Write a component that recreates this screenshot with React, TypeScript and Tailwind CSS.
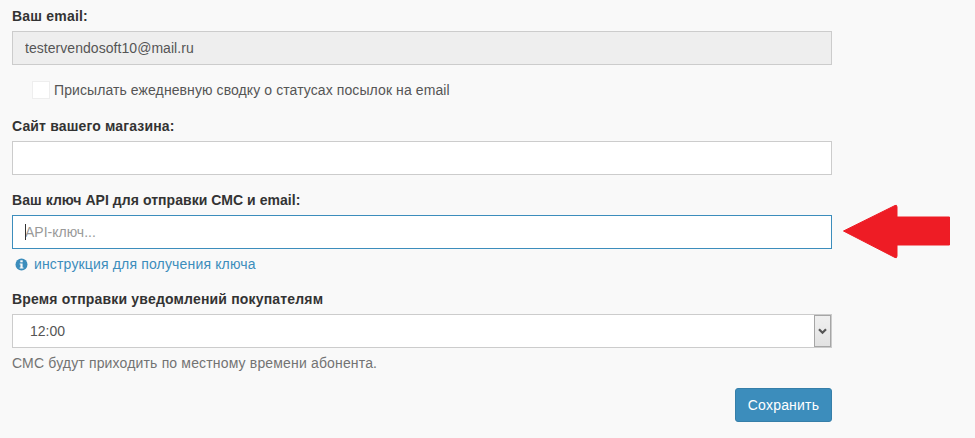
const labelClass = 'block h-5 mb-[5px] text-sm leading-5 font-bold text-[#333333]';
const inputClass =
  'block w-full h-[34px] px-3 border bg-white text-sm text-[#555555] outline-none placeholder:text-[#999999]';

export default function App() {
  return (
    <div className="w-[975px] h-[438px] overflow-hidden relative bg-[#f9f9f9] font-['Liberation_Sans',Arial,sans-serif] text-sm leading-5 text-[#333333]">
      <form className="w-[820px] ml-3 pt-1.5">
        <label className={`${labelClass} tracking-[0.2px]`}>Ваш email:</label>
        <input
          readOnly
          value="testervendosoft10@mail.ru"
          className="block w-full h-[34px] px-3 border border-[#cccccc] bg-[#eeeeee] text-sm text-[#555555] outline-none tracking-[0.05px]"
        />

        <div className="flex items-center h-5 mt-[15px] ml-5">
          <span className="w-[18px] h-[18px] border border-[#eeeeee] bg-white" />
          <span className="ml-1 text-[#555555] tracking-[0.09px]">Присылать ежедневную сводку о статусах посылок на email</span>
        </div>

        <label className={`${labelClass} mt-4 tracking-[0.15px]`}>Сайт вашего магазина:</label>
        <input className={`${inputClass} border-[#cccccc]`} />

        <label className={`${labelClass} mt-[15px] tracking-[0.05px]`}>Ваш ключ API для отправки СМС и email:</label>
        <div className="relative">
          <input placeholder="API-ключ..." className={`${inputClass} border-[#3c8dbc]`} />
          <span className="absolute left-[13px] top-[9px] w-px h-4 bg-[#333333]" />
        </div>

        <a className="flex items-center h-5 mt-[5px] ml-[3px] text-[#3c8dbc]">
          <svg width="13" height="13" viewBox="0 0 13 13">
            <circle cx="6.5" cy="6.5" r="6" fill="#3c8dbc" />
            <rect x="5.3" y="2.3" width="2.4" height="2" fill="#f9f9f9" />
            <path d="M4.6 5.4H7.6V9.4H8.5V10.6H4.6V9.4H5.4V6.6H4.6Z" fill="#f9f9f9" />
          </svg>
          <span className="ml-1.5 tracking-[0.16px]">инструкция для получения ключа</span>
        </a>

        <label className={`${labelClass} mt-[15px] tracking-[0.18px]`}>Время отправки уведомлений покупателям</label>
        <div className="flex h-[34px] border border-[#cccccc] bg-white text-[#555555]">
          <span className="flex-1 pl-[17px] leading-8">12:00</span>
          <span className="flex items-center justify-center w-[17px] h-full border border-[#a6a6a6] bg-gradient-to-b from-[#f0f0f0] to-[#e2e2e2]">
            <svg width="9" height="7" viewBox="0 0 9 7">
              <path d="M1 1.2l3.5 3.5 3.5-3.5" fill="none" stroke="#555555" strokeWidth="2.2" />
            </svg>
          </span>
        </div>
        <p className="mt-[5px] h-5 text-[#737373] tracking-[0.16px]">СМС будут приходить по местному времени абонента.</p>

        <div className="flex justify-end mt-[15px]">
          <button type="button" className="h-[34px] w-[97px] rounded-[3px] border border-[#367fa9] bg-[#3c8dbc] text-white text-sm tracking-[0.2px]">
            Сохранить
          </button>
        </div>
      </form>

      <svg className="absolute left-[842px] top-[204px]" width="108" height="56" viewBox="0 0 108 56">
        <path
          d="M1.5 27 L53 1.5 Q55 0.5 55 3 V13 H107.5 V41 H55 V52 Q55 54.5 53 53.5 Z"
          fill="#ee1c25"
          stroke="#ee1c25"
          strokeLinejoin="round"
        />
      </svg>
    </div>
  );
}
